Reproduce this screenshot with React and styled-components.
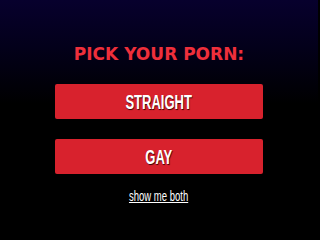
import React from "react";
import styled, { createGlobalStyle } from "styled-components";

const Global = createGlobalStyle`
  html, body { margin: 0; padding: 0; }
  body {
    background: #000;
    width: 318px;
    height: 216px;
    overflow: hidden;
  }
`;

const Page = styled.div`
  width: 318px;
  height: 216px;
  background: linear-gradient(180deg, #07002d 0%, #03001a 22%, #000000 48%, #000000 100%);
  display: flex;
  flex-direction: column;
  align-items: center;
  box-sizing: border-box;
  padding-top: 44px;
`;

const Heading = styled.h2`
  margin: 0;
  font-family: "DejaVu Sans", sans-serif;
  font-weight: 700;
  font-size: 17px;
  line-height: 20px;
  color: #ef2f3b;
`;

const Choices = styled.div`
  display: flex;
  flex-direction: column;
  gap: 20px;
  margin-top: 20px;
  width: 208px;
`;

const Choice = styled.button`
  height: 35px;
  width: 100%;
  border: none;
  border-radius: 2px;
  background: #d8222d;
  padding: 0;
  cursor: pointer;
  display: flex;
  align-items: center;
  justify-content: center;
`;

const Condensed = styled.span`
  display: inline-block;
  font-family: "Liberation Sans", Arial, sans-serif;
  font-weight: 700;
  font-size: 21px;
  line-height: 21px;
  color: #fff;
  transform: scaleX(${(p) => p.$scale});
  text-shadow: 1px 1px 1px rgba(50, 0, 0, 0.95);
  white-space: nowrap;
`;

const Both = styled.a`
  display: inline-block;
  margin-top: 15px;
  font-family: "Liberation Sans", Arial, sans-serif;
  font-size: 14px;
  line-height: 15px;
  color: #fff;
  text-decoration: underline;
  transform: scaleX(0.68);
  white-space: nowrap;
`;

export default function App() {
  return (
    <>
      <Global />
      <Page>
        <Heading>PICK YOUR PORN:</Heading>
        <Choices>
          <Choice><Condensed $scale={0.62}>STRAIGHT</Condensed></Choice>
          <Choice><Condensed $scale={0.62}>GAY</Condensed></Choice>
        </Choices>
        <Both href="#">show me both</Both>
      </Page>
    </>
  );
}
